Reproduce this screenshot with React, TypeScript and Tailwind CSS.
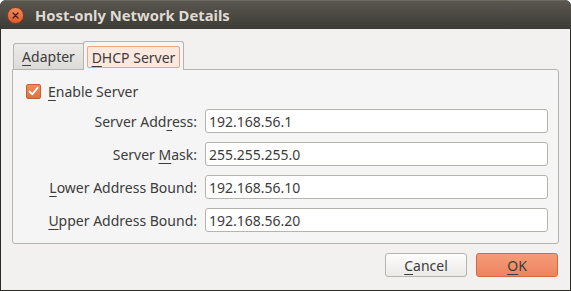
import React from 'react';

function U({ children }: { children: React.ReactNode }) {
  return <span className="underline underline-offset-[3px] decoration-[1px]">{children}</span>;
}

function Field({ label, value }: { label: React.ReactNode; value: string }) {
  return (
    <>
      <div className="flex items-center justify-end text-[#3c3c3c]">{label}</div>
      <div className="h-[24px] rounded-[3px] border border-[#b6b4af] bg-white flex items-center pl-[3px] text-[#3c3c3c]">
        {value}
      </div>
    </>
  );
}

export default function App() {
  return (
    <div className="w-[571px] h-[291px] flex flex-col overflow-hidden rounded-t-[6px] bg-[#2b2a27] font-['Noto_Sans',sans-serif] text-[14px]">
      {/* title bar */}
      <div className="h-[29px] shrink-0 flex items-center gap-[11px] pl-[7px] bg-gradient-to-b from-[#5a574f] to-[#3c3b36] border-t border-[#6d6a62] rounded-t-[6px]">
        <div className="w-[17px] h-[17px] rounded-full bg-gradient-to-b from-[#f58a5c] to-[#df5a2a] border border-[#8c3a1c] flex items-center justify-center">
          <svg width="7" height="7" viewBox="0 0 7 7">
            <path d="M1 1L6 6M6 1L1 6" stroke="#3a2418" strokeWidth="1.3" strokeLinecap="round" />
          </svg>
        </div>
        <span className="font-bold text-[14.8px] text-[#dfdbd2]">Host-only Network Details</span>
      </div>

      {/* body */}
      <div className="flex-1 mx-[1px] mb-[1px] bg-[#f2f1f0] flex flex-col px-[11px] pt-[11px]">
        {/* tabs */}
        <div className="flex items-end h-[29px] pl-[1px]">
          <div className="h-[26px] w-[71px] border border-b-0 border-[#b6b4af] rounded-tl-[3px] bg-gradient-to-b from-[#ecebe9] to-[#dcdbd8] flex items-center justify-center text-[#3c3c3c]">
            <span><U>A</U>dapter</span>
          </div>
          <div className="h-[29px] w-[101px] border border-b-0 border-[#b6b4af] rounded-t-[3px] bg-[#f5f5f5] flex items-start justify-center pt-[4px] -ml-[1px] relative z-10 -mb-[1px] pb-[1px]">
            <div className="h-[22px] w-[93px] rounded-[2px] border border-[#eea585] bg-[#fbe8df] flex items-center justify-center text-[#3c3c3c]">
              <span><U>D</U>HCP Server</span>
            </div>
          </div>
        </div>

        {/* panel */}
        <div className="h-[175px] border border-[#b6b4af] rounded-b-[3px] rounded-tr-[3px] bg-[#f5f5f5] pt-[13px] pr-[10px]">
          <div className="flex items-center gap-[7px] pl-[13px] h-[16px]">
            <div className="w-[15px] h-[15px] rounded-[2px] border border-[#c8602f] bg-gradient-to-b from-[#ef8c60] to-[#e46f3d] flex items-center justify-center">
              <svg width="11" height="11" viewBox="0 0 11 11">
                <path d="M1.5 5.5L4.3 8.4L9.6 1.8" stroke="#fff" strokeWidth="1.8" fill="none" strokeLinecap="round" strokeLinejoin="round" />
              </svg>
            </div>
            <span className="text-[#3c3c3c]"><U>E</U>nable Server</span>
          </div>
          <div className="grid grid-cols-[184px_1fr] gap-x-[8px] gap-y-[9px] mt-[10px]">
            <Field label={<span>Server Add<U>r</U>ess:</span>} value="192.168.56.1" />
            <Field label={<span>Server <U>M</U>ask:</span>} value="255.255.255.0" />
            <Field label={<span><U>L</U>ower Address Bound:</span>} value="192.168.56.10" />
            <Field label={<span><U>U</U>pper Address Bound:</span>} value="192.168.56.20" />
          </div>
        </div>

        {/* buttons */}
        <div className="flex justify-end gap-[9px] mt-[9px] pr-[1px]">
          <button className="w-[82px] h-[24px] rounded-[3px] border border-[#b6b4af] bg-gradient-to-b from-[#fdfdfd] to-[#eceae7] text-[#3c3c3c]">
            <U>C</U>ancel
          </button>
          <button className="w-[82px] h-[24px] rounded-[3px] border border-[#d4693f] bg-gradient-to-b from-[#f59c78] to-[#ee8360] text-[#3c3c3c]">
            <U>O</U>K
          </button>
        </div>
      </div>
    </div>
  );
}
